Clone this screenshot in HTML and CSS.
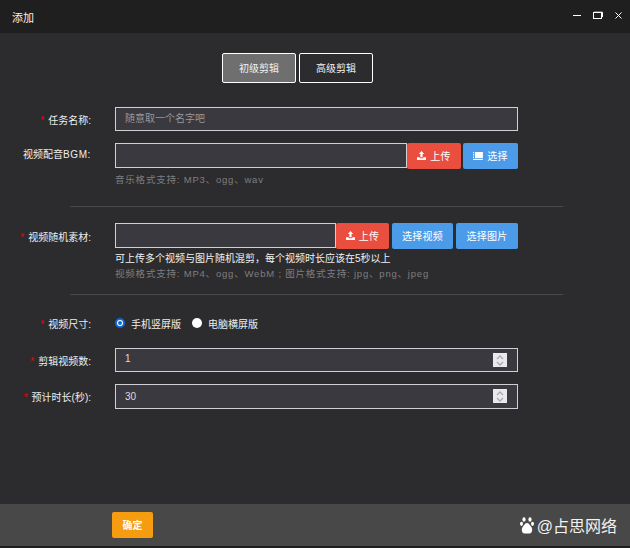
FILE: index.html
```html
<!DOCTYPE html>
<html lang="zh">
<head>
<meta charset="utf-8">
<title>添加</title>
<link rel="stylesheet" href="styles.css">
</head>
<body>
<div class="window">
  <header class="titlebar">
    <span class="title">添加</span>
    <div class="controls">
      <svg width="8" height="2" viewBox="0 0 8 2"><rect width="8" height="1" y="1" fill="#fff"/></svg>
      <svg width="10" height="8" viewBox="0 0 10 8" fill="none" stroke="#fff"><rect x=".5" y="1.500" width="8" height="6" stroke-width="1"/><path d="M1 1.200H9.500V6" stroke-width="1"/></svg>
      <svg width="7" height="7" viewBox="0 0 7 7" stroke="#fff" stroke-width="1"><path d="M.5.5l6 6M6.500.5l-6 6"/></svg>
    </div>
  </header>
  <main class="content">
    <div class="tabs">
      <button class="tab active">初级剪辑</button>
      <button class="tab">高级剪辑</button>
    </div>
    <div class="row row-name">
      <label class="label"><i>*</i>任务名称:</label>
      <div class="field"><div class="input placeholder">随意取一个名字吧</div></div>
    </div>
    <div class="row row-bgm">
      <label class="label">视频配音<span class="latin">BGM:</span></label>
      <div class="field">
        <div class="group">
          <div class="input grow tall"></div>
          <button class="btn red">
            <svg class="ico" viewBox="0 0 10 10"><path d="M5 0 8 3.400H6.200V7H3.800V3.400H2zM0 7H3V8H7V7H10V10H0z" fill="#fff"/></svg>上传</button>
          <button class="btn blue choose">
            <svg class="ico wide" viewBox="0 0 11 9"><path d="M0 0H1V1H0zM2 0H11V7H2zM0 2H1V4H0zM0 5H1V7H0zM0 8H11V9H0z" fill="#fff"/></svg>选择</button>
        </div>
        <p class="hint">音乐格式支持: MP3、ogg、wav</p>
      </div>
    </div>
    <hr class="divider first">
    <div class="row row-media">
      <label class="label"><i>*</i>视频随机素材:</label>
      <div class="field">
        <div class="group">
          <div class="input grow tall"></div>
          <button class="btn red">
            <svg class="ico" viewBox="0 0 10 10"><path d="M5 0 8 3.400H6.200V7H3.800V3.400H2zM0 7H3V8H7V7H10V10H0z" fill="#fff"/></svg>上传</button>
          <button class="btn blue pick">选择视频</button>
          <button class="btn blue pick">选择图片</button>
        </div>
        <p class="note">可上传多个视频与图片随机混剪，每个视频时长应该在5秒以上</p>
        <p class="hint tight">视频格式支持: MP4、ogg、WebM ; 图片格式支持: jpg、png、jpeg</p>
      </div>
    </div>
    <hr class="divider second">
    <div class="row row-size">
      <label class="label"><i>*</i>视频尺寸:</label>
      <div class="field radios">
        <span class="radio-item"><span class="radio on"></span>手机竖屏版</span>
        <span class="radio-item"><span class="radio"></span>电脑横屏版</span>
      </div>
    </div>
    <div class="row row-count">
      <label class="label"><i>*</i>剪辑视频数:</label>
      <div class="field"><div class="input number">1<span class="spin"><svg width="8" height="11" viewBox="0 0 8 11" fill="none" stroke="#a9a9b0" stroke-width="1.400"><path d="M1 4 4 1 7 4M1 7l3 3 3-3"/></svg></span></div></div>
    </div>
    <div class="row row-time">
      <label class="label"><i>*</i>预计时长(秒):</label>
      <div class="field"><div class="input number tallish">30<span class="spin"><svg width="8" height="11" viewBox="0 0 8 11" fill="none" stroke="#a9a9b0" stroke-width="1.400"><path d="M1 4 4 1 7 4M1 7l3 3 3-3"/></svg></span></div></div>
    </div>
  </main>
  <footer class="footer">
    <button class="confirm">确定</button>
    <div class="mark">
      <svg width="14" height="17" viewBox="0 0 14 17" fill="#fff"><ellipse cx="4" cy="2.500" rx="1.600" ry="2.300"/><ellipse cx="10" cy="2.500" rx="1.600" ry="2.300"/><ellipse cx="1.500" cy="6.800" rx="1.500" ry="2.100"/><ellipse cx="12.500" cy="6.800" rx="1.500" ry="2.100"/><path d="M7 6c2 0 2.500 2 4 3.500 2 2.200 1.500 7-1.500 7H4.500c-3 0-3.500-4.800-1.500-7C4.500 8 5 6 7 6z"/></svg>
      <span>@占思网络</span>
    </div>
  </footer>
</div>
</body>
</html>
```
FILE: styles.css
```css
* { box-sizing: border-box; }
html, body { margin: 0; padding: 0; height: 100%; }
body {
  background: #2c2c2e;
  color: #fff;
  font-family: "Liberation Sans", "Noto Sans CJK SC", sans-serif;
  font-size: 10px;
  overflow: hidden;
}
.window { width: 630px; height: 548px; display: flex; flex-direction: column; }

.titlebar {
  height: 33px;
  flex: none;
  background: #1f1f1f;
  display: flex;
  align-items: center;
  justify-content: space-between;
  padding: 0 8px 0 12px;
}
.title { font-size: 11px; color: #f4f4f4; }
.controls { display: flex; align-items: center; gap: 12px; margin-top: -3px; }
.controls svg { display: block; }

.content { flex: 1; padding-top: 20px; background: #2c2c2e; }
.tabs { display: flex; justify-content: center; gap: 3px; padding-right: 35px; margin-bottom: 24px; }
.tab {
  width: 74px;
  height: 30px;
  padding: 0 0 2px;
  background: transparent;
  border: 1px solid #fff;
  border-radius: 2px;
  color: #f2f2f2;
  font: 10px "Noto Sans CJK SC", sans-serif;
}
.tab.active { background: #6f6f6f; }

.row { display: grid; grid-template-columns: 91px 403px; column-gap: 24px; }
.label {
  text-align: right;
  font-size: 10px;
  color: #eee;
  line-height: 22px;
  padding-top: 3px;
  white-space: nowrap;
}
.label i { color: #e00; font-style: normal; margin-right: 4px; }
.latin { letter-spacing: .6px; }
.row-bgm .label { padding-top: 1px; }
.row-media .label { padding-top: 4px; }

.input {
  height: 24px;
  background: #3a393f;
  border: 1px solid #cfd0d4;
  color: #ddd;
  font-size: 10px;
  line-height: 21px;
  padding: 0 9px;
}
.input.tall { height: 25px; }
.input.tallish { height: 25px; line-height: 23px; }
.input.grow { flex: 1; }
.placeholder { color: #98989b; }
.row-count .input { line-height: 20px; }

.group { display: flex; align-items: flex-start; }
.btn {
  height: 26px;
  padding: 0 0 1px;
  border: 0;
  border-radius: 2px;
  color: #fff;
  font: 10px "Noto Sans CJK SC", sans-serif;
  letter-spacing: .3px;
  display: inline-flex;
  align-items: center;
  justify-content: center;
}
.red { background: #e94e3e; width: 54px; }
.row-media .red { width: 53px; }
.blue { background: #4b9be9; }
.choose { width: 55px; margin-left: 2px; }
.pick { width: 61px; margin-left: 3px; }
.pick:last-child { width: 62px; }
.ico { width: 9px; height: 9px; margin-right: 4px; }
.ico.wide { width: 10px; height: 8px; }

.hint { margin: 4px 0 0; font-size: 9.500px; letter-spacing: .8px; color: #7e7e80; line-height: 14px; white-space: nowrap; }
.hint.tight { margin: 1px 0 0; }
.note { margin: 3px 0 0; font-size: 10px; color: #f2f2f2; line-height: 14px; white-space: nowrap; }

.divider { border: 0; height: 1px; background: #49494b; margin: 0 67px 0 70px; }

.row-name { margin-bottom: 11px; }
.divider.first { margin-top: 19px; margin-bottom: 16px; }
.divider.second { margin-top: 13px; margin-bottom: 19px; }
.row-size { margin-bottom: 14px; }
.row-size .label { line-height: 18px; padding-top: 2px; }
.row-count { margin-bottom: 11px; }

.radios { display: flex; align-items: center; gap: 11px; height: 16px; margin-top: 1px; font-size: 10px; color: #eee; }
.radio-item { display: inline-flex; align-items: center; gap: 6px; }
.radio { width: 10px; height: 10px; border-radius: 50%; background: #fff; display: block; }
.radio.on { border: 2px solid #1268d8; background: #fff; }
.radio.on::after { content: ""; display: block; width: 4px; height: 4px; margin: 1px; border-radius: 50%; background: #1268d8; }

.number { position: relative; }
.spin {
  position: absolute;
  right: 10px;
  top: 4px;
  width: 14px;
  height: 14px;
  background: #eaeaec;
  display: flex;
  align-items: center;
  justify-content: center;
}
.spin svg { display: block; }

.footer {
  height: 42px;
  flex: none;
  margin-bottom: 2px;
  background: #484848;
  display: flex;
  align-items: center;
  justify-content: space-between;
  padding: 0 13px 0 112px;
  box-shadow: 0 2px 0 #1f1f1f;
}
.confirm {
  width: 41px;
  height: 26px;
  padding: 0 0 1px;
  border: 0;
  border-radius: 2px;
  background: #f59c10;
  color: #fff;
  font: bold 10px "Noto Sans CJK SC", sans-serif;
}
.mark { display: flex; align-items: center; gap: 3px; font-size: 16px; color: #f2f2f2; }
.mark svg { display: block; }
```
